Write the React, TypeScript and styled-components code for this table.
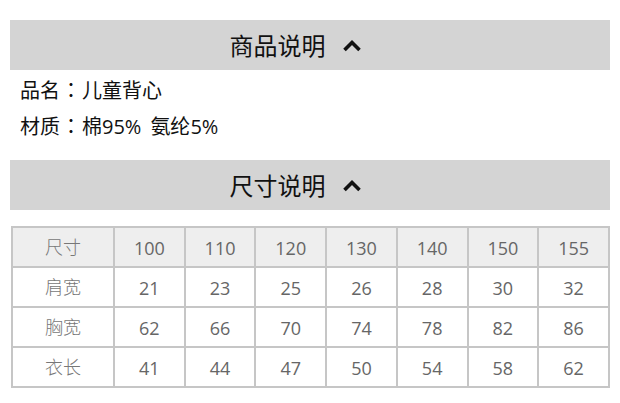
import styled, { createGlobalStyle } from 'styled-components';

const GlobalStyle = createGlobalStyle`
  body {
    margin: 0;
    background: #ffffff;
    font-family: "Open Sans", "Noto Sans CJK SC", sans-serif;
  }
`;

const Page = styled.div`
  width: 600px;
  padding: 20px 10px 0;
`;

const SectionBar = styled.div`
  height: 50px;
  background: #d4d4d4;
  display: flex;
  align-items: center;
  justify-content: center;
  padding-right: 29px;
  box-sizing: border-box;
  gap: 16px;
`;

const SectionTitle = styled.h2`
  margin: 0;
  font-family: "Noto Sans CJK SC", sans-serif;
  font-size: 24px;
  font-weight: 400;
  color: #111;
  line-height: 1;
`;

const Chevron = () => (
  <svg width="20" height="13" viewBox="0 0 20 13">
    <polyline points="2.5,11 10,3.5 17.5,11" fill="none" stroke="#111" strokeWidth="3.6" />
  </svg>
);

const Info = styled.div`
  height: 90px;
  padding: 2px 0 0 10px;
  box-sizing: border-box;
`;

const InfoLine = styled.p`
  margin: 0;
  font-family: "Noto Sans CJK SC", sans-serif;
  font-size: 20px;
  font-weight: 400;
  line-height: 36px;
  color: #111;
  white-space: pre;
`;

const Colon = styled.span`
  font-family: "Noto Sans CJK TC", sans-serif;
  margin: 0 1px;
`;

const Num = styled.span`
  font-family: "Open Sans", sans-serif;
  font-size: 20px;
`;

const SizeTable = styled.table`
  margin: 16px 0 0 1px;
  width: 599px;
  border-collapse: collapse;
  table-layout: fixed;
  border: 2px solid #c6c6c6;
`;

const Row = styled.tr<{ $head?: boolean }>`
  height: 40px;
  background: ${p => (p.$head ? '#eeeeee' : '#ffffff')};
`;

const Cell = styled.td<{ $label?: boolean }>`
  border: 2px solid #c6c6c6;
  padding: ${p => (p.$label ? '0 0 2px' : '2px 0 0')};
  text-align: center;
  color: ${p => (p.$label ? '#777' : '#666')};
  font-family: ${p => (p.$label ? '"Noto Sans CJK SC", sans-serif' : '"Open Sans", sans-serif')};
  font-weight: ${p => (p.$label ? 300 : 400)};
  font-size: 18px;
`;

const sizes = ['100', '110', '120', '130', '140', '150', '155'];
const rows: [string, string[]][] = [
  ['肩宽', ['21', '23', '25', '26', '28', '30', '32']],
  ['胸宽', ['62', '66', '70', '74', '78', '82', '86']],
  ['衣长', ['41', '44', '47', '50', '54', '58', '62']],
];

export default function App() {
  return (
    <>
      <GlobalStyle />
      <Page>
        <SectionBar>
          <SectionTitle>商品说明</SectionTitle>
          <Chevron />
        </SectionBar>
        <Info>
          <InfoLine>
            品名<Colon>：</Colon>儿童背心
          </InfoLine>
          <InfoLine>
            材质<Colon>：</Colon>棉<Num>95%</Num>{'  '}氨纶<Num>5%</Num>
          </InfoLine>
        </Info>
        <SectionBar>
          <SectionTitle>尺寸说明</SectionTitle>
          <Chevron />
        </SectionBar>
        <SizeTable>
          <colgroup>
            <col style={{ width: 102 }} />
            {sizes.map(s => (
              <col key={s} />
            ))}
          </colgroup>
          <tbody>
            <Row $head>
              <Cell $label>尺寸</Cell>
              {sizes.map(s => (
                <Cell key={s}>{s}</Cell>
              ))}
            </Row>
            {rows.map(([label, vals]) => (
              <Row key={label}>
                <Cell $label>{label}</Cell>
                {vals.map((v, i) => (
                  <Cell key={i}>{v}</Cell>
                ))}
              </Row>
            ))}
          </tbody>
        </SizeTable>
      </Page>
    </>
  );
}
